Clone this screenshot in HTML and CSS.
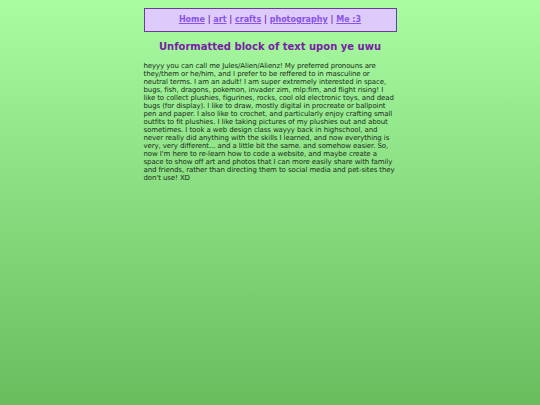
FILE: index.html
```html
<!DOCTYPE html>
<html>
<head>
<meta charset="utf-8">
<link rel="stylesheet" href="styles.css">
</head>
<body>
<div class="page">
  <nav class="nav">
    <a href="#">Home</a> <span class="sep">|</span> <a href="#">art</a> <span class="sep">|</span> <a href="#">crafts</a> <span class="sep">|</span> <a href="#">photography</a> <span class="sep">|</span> <a href="#">Me :3</a>
  </nav>
  <h1 class="title">Unformatted block of text upon ye uwu</h1>
  <p class="text">heyyy you can call me Jules/Alien/Alienz! My preferred pronouns are<br>
they/them or he/him, and I prefer to be reffered to in masculine or<br>
neutral terms. I am an adult! I am super extremely interested in space,<br>
bugs, fish, dragons, pokemon, invader zim, mlp:fim, and flight rising! I<br>
like to collect plushies, figurines, rocks, cool old electronic toys, and dead<br>
bugs (for display). I like to draw, mostly digital in procreate or ballpoint<br>
pen and paper. I also like to crochet, and particularly enjoy crafting small<br>
outfits to fit plushies. I like taking pictures of my plushies out and about<br>
sometimes. I took a web design class wayyy back in highschool, and<br>
never really did anything with the skills I learned, and now everything is<br>
very, very different... and a little bit the same. and somehow easier. So,<br>
now I'm here to re-learn how to code a website, and maybe create a<br>
space to show off art and photos that I can more easily share with family<br>
and friends, rather than directing them to social media and pet-sites they<br>
don't use! XD</p>
</div>
</body>
</html>
```
FILE: styles.css
```css
html, body {
  margin: 0;
  padding: 0;
  height: 100%;
}
body {
  background: linear-gradient(to bottom, #a9fca2 0%, #68bd5d 100%);
  min-height: 405px;
  font-family: "DejaVu Sans", Verdana, sans-serif;
}
.page {
  width: 253px;
  margin: 0 auto;
  padding-top: 8px;
}
.nav {
  box-sizing: border-box;
  height: 24px;
  border: 1px solid #6a3c9c;
  background: #dccbfb;
  text-align: center;
  line-height: 22px;
  font-size: 8px;
  font-weight: bold;
}
.nav a {
  color: #8a52e6;
  text-decoration: underline;
}
.sep {
  color: #7b2aa8;
}
.title {
  margin: 9px 0 0;
  text-align: center;
  font-size: 10px;
  font-weight: bold;
  color: #7a20a6;
}
.text {
  margin: 10px 0 0;
  font-size: 7px;
  letter-spacing: -0.1px;
  line-height: 8px;
  white-space: nowrap;
  color: #1b2a1a;
}
```
